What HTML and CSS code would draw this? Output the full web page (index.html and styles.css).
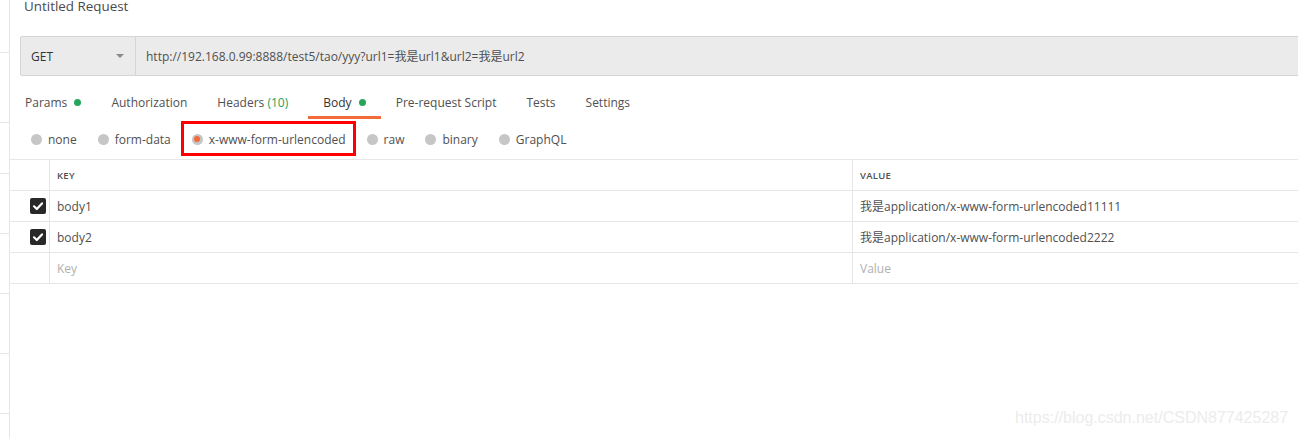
FILE: index.html
```html
<!DOCTYPE html>
<html lang="zh">
<head>
<meta charset="utf-8">
<title>Untitled Request</title>
<link rel="stylesheet" href="styles.css">
</head>
<body>
<div class="app">
  <aside class="sidebar">
    <div class="side-seg s1"></div>
    <div class="side-seg s2"></div>
    <div class="side-seg s3"></div>
    <div class="side-seg s4"></div>
    <div class="side-seg s4"></div>
    <div class="side-seg s4"></div>
    <div class="side-seg s4"></div>
  </aside>
  <main class="main">
    <div class="title">Untitled Request</div>
    <div class="urlbar">
      <div class="method">
        <span>GET</span>
        <span class="caret"></span>
      </div>
      <div class="url">http://192.168.0.99:8888/test5/tao/yyy?url1=我是url1&amp;url2=我是url2</div>
    </div>
    <nav class="tabs">
      <div class="tab">Params <span class="dot"></span></div>
      <div class="tab">Authorization</div>
      <div class="tab wide">Headers <span class="count">(10)</span></div>
      <div class="tab active">Body <span class="dot"></span></div>
      <div class="tab">Pre-request Script</div>
      <div class="tab">Tests</div>
      <div class="tab">Settings</div>
    </nav>
    <div class="radios">
      <div class="radio"><span class="circle"></span>none</div>
      <div class="radio"><span class="circle"></span>form-data</div>
      <div class="radio selected"><span class="circle"></span>x-www-form-urlencoded</div>
      <div class="radio"><span class="circle"></span>raw</div>
      <div class="radio"><span class="circle"></span>binary</div>
      <div class="radio"><span class="circle"></span>GraphQL</div>
    </div>
    <div class="table">
      <div class="cell check"></div>
      <div class="cell head">KEY</div>
      <div class="cell head last">VALUE</div>

      <div class="cell check"><span class="box"><svg viewBox="0 0 16 16" width="16" height="16"><path d="M4 8.3 L6.8 11 L12 5.4" fill="none" stroke="#fff" stroke-width="2.2" stroke-linecap="round" stroke-linejoin="round"/></svg></span></div>
      <div class="cell">body1</div>
      <div class="cell last">我是application/x-www-form-urlencoded11111</div>

      <div class="cell check"><span class="box"><svg viewBox="0 0 16 16" width="16" height="16"><path d="M4 8.3 L6.8 11 L12 5.4" fill="none" stroke="#fff" stroke-width="2.2" stroke-linecap="round" stroke-linejoin="round"/></svg></span></div>
      <div class="cell">body2</div>
      <div class="cell last">我是application/x-www-form-urlencoded2222</div>

      <div class="cell check"></div>
      <div class="cell placeholder">Key</div>
      <div class="cell placeholder last">Value</div>
    </div>
  </main>
</div>
<div class="watermark">https://blog.csdn.net/CSDN877425287</div>
</body>
</html>
```
FILE: styles.css
```css
html, body {
  margin: 0;
  padding: 0;
  background: #fff;
  overflow: hidden;
  height: 438px;
}
body {
  font-family: "Open Sans", "Noto Sans CJK SC", sans-serif;
  color: #505050;
  font-size: 12px;
}
.app {
  display: flex;
  height: 438px;
}
.sidebar {
  width: 9px;
  flex: none;
  border-right: 1px solid #e6e6e6;
  display: flex;
  flex-direction: column;
}
.side-seg {
  border-bottom: 1px solid #e6e6e6;
  flex: none;
}
.s1 { height: 52px; }
.s2 { height: 69px; }
.s3 { height: 50px; }
.s4 { height: 59px; }

.main {
  flex: 1;
  min-width: 0;
}
.title {
  font-size: 13.4px;
  line-height: 13px;
  height: 13px;
  padding-left: 14px;
  color: #4a4a4a;
}
.urlbar {
  margin: 23px -20px 0 10px;
  height: 38px;
  background: #ebebeb;
  border: 1px solid #d5d5d5;
  border-radius: 2px;
  display: flex;
  align-items: center;
}
.method {
  width: 115px;
  height: 100%;
  flex: none;
  border-right: 1px solid #d5d5d5;
  display: flex;
  align-items: center;
  justify-content: space-between;
  padding: 0 11px 0 10px;
  box-sizing: border-box;
  color: #333;
}
.caret {
  width: 0;
  height: 0;
  border-left: 4px solid transparent;
  border-right: 4px solid transparent;
  border-top: 4px solid #8a8a8a;
}
.url {
  padding-left: 10px;
  color: #505050;
}
.tabs {
  display: flex;
  margin-top: 12px;
  height: 31px;
}
.tab {
  padding: 0 15px;
  display: flex;
  align-items: center;
  gap: 4px;
  border-bottom: 2px solid transparent;
  box-sizing: border-box;
  height: 31px;
  white-space: pre;
}
.tab.wide { padding-right: 20px; }
.tab.active {
  border-bottom: 3px solid #f26b3a;
  color: #333;
}
.tab .count { color: #26a05b; margin-left: -4px; }
.dot {
  width: 7px;
  height: 7px;
  border-radius: 50%;
  background: #26a65b;
  display: inline-block;
}
.radios {
  display: flex;
  align-items: center;
  gap: 21px;
  padding-left: 21px;
  height: 40px;
}
.radio {
  display: flex;
  align-items: center;
  gap: 6px;
  position: relative;
}
.circle {
  width: 11px;
  height: 11px;
  border-radius: 50%;
  background: #c6c6c6;
  display: inline-flex;
  align-items: center;
  justify-content: center;
}
.radio.selected .circle::after {
  content: "";
  width: 6px;
  height: 6px;
  border-radius: 50%;
  background: #f26b3a;
}
.radio.selected::before {
  content: "";
  position: absolute;
  left: -11px;
  right: -10px;
  top: 50%;
  height: 35px;
  margin-top: -18px;
  box-sizing: border-box;
  border: 3px solid #ff0000;
}
.table {
  display: grid;
  grid-template-columns: 40px 803px 1fr;
  grid-auto-rows: 31px;
  border-top: 1px solid #e6e6e6;
  margin-right: -20px;
}
.cell {
  border-bottom: 1px solid #e6e6e6;
  border-right: 1px solid #e6e6e6;
  display: flex;
  align-items: center;
  padding-left: 7px;
  color: #505050;
}
.cell.last { border-right: none; }
.cell.head {
  font-size: 9.5px;
  font-weight: 600;
  letter-spacing: 0.3px;
  color: #505050;
}
.cell.check {
  justify-content: flex-end;
  padding: 0 3px 0 0;
}
.box {
  width: 16px;
  height: 16px;
  background: #282828;
  border-radius: 2px;
  display: flex;
}
.placeholder { color: #b0b0b0; }
.watermark {
  position: absolute;
  left: 1015px;
  top: 409px;
  font-family: "Liberation Sans", Arial, sans-serif;
  font-size: 16px;
  color: #ececec;
}
```
